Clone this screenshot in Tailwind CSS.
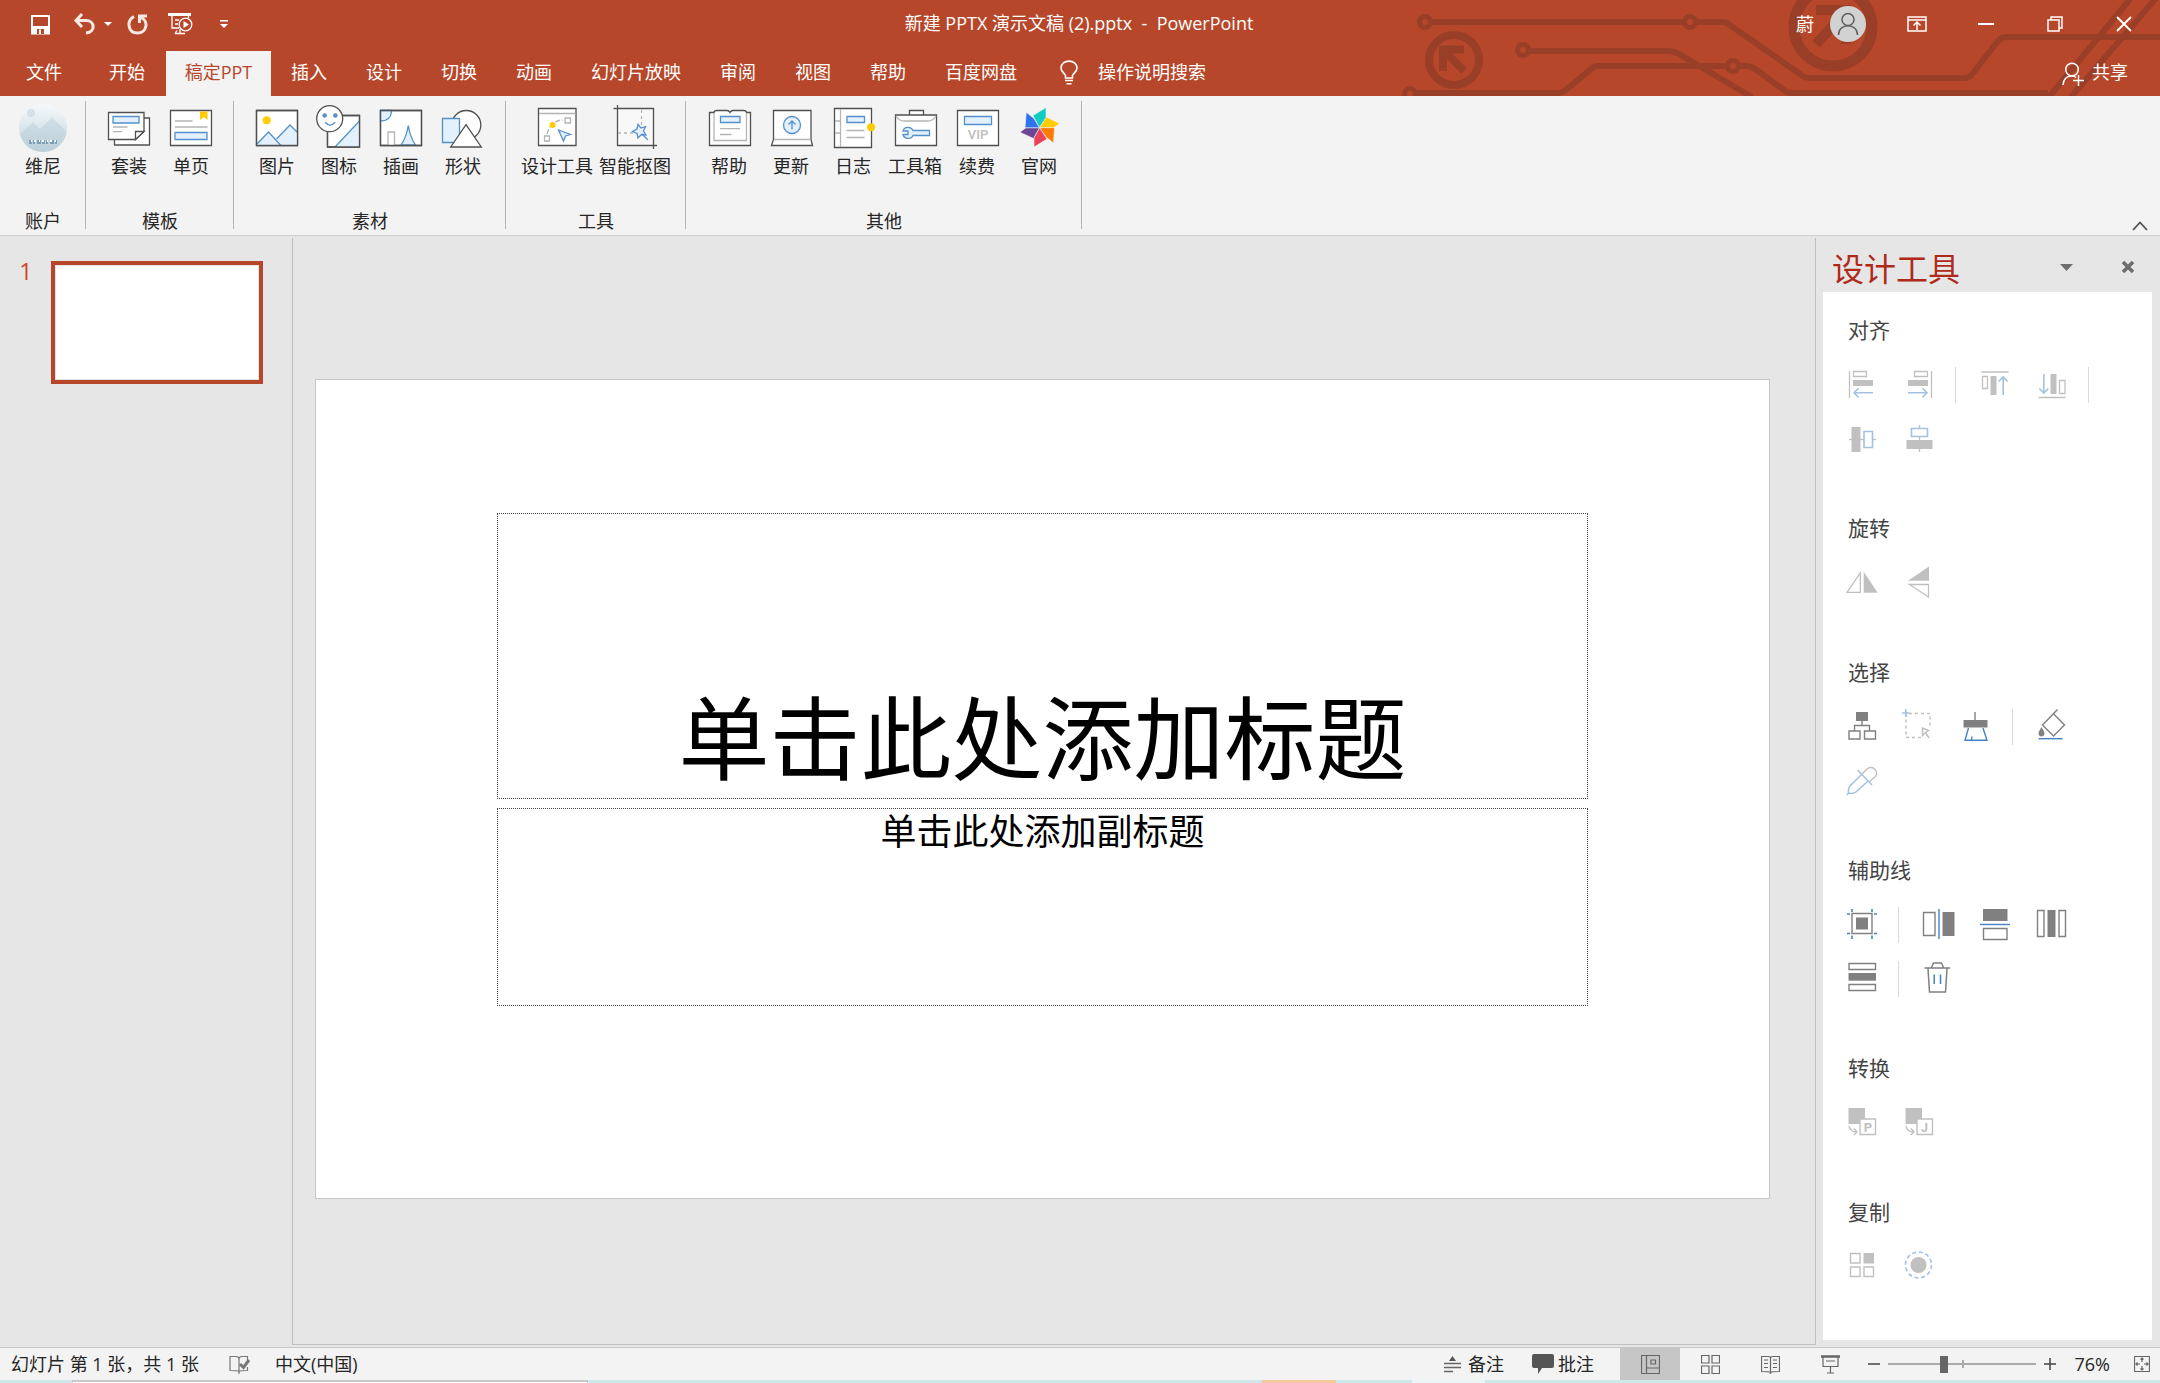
<!DOCTYPE html>
<html lang="zh-CN">
<head>
<meta charset="utf-8">
<meta name="viewport" content="width=device-width, initial-scale=1">
<title>新建 PPTX 演示文稿 (2).pptx - PowerPoint</title>
<script src="https://cdn.jsdelivr.net/npm/@tailwindcss/browser@4"></script>
</head>
<body class="flex min-h-screen flex-col bg-[#e6e6e6] font-['Open_Sans','Noto_Sans_CJK_SC',sans-serif] text-[18px] leading-6 text-[#262626]">

<header class="relative bg-[#b7472a] text-white">
  <!-- circuit decoration -->
  <svg class="absolute top-0 right-0 h-24 w-[780px]" viewBox="0 0 780 96" fill="none" stroke="#993f28" stroke-width="6" aria-hidden="true">
    <circle cx="45" cy="22" r="5.5" stroke-width="5"/><circle cx="310" cy="22" r="5.5" stroke-width="5"/>
    <path d="M51 22H304M316 22H342Q347 22 351 26L420 74Q424 78 430 78H584Q590 78 593 73L618 41Q621 37 627 37H780"/>
    <circle cx="143" cy="50" r="5.5" stroke-width="5"/>
    <path d="M149 51H288Q294 51 299 54L372 97"/>
    <circle cx="30" cy="94" r="5.5" stroke-width="5"/><circle cx="353" cy="66" r="5.5" stroke-width="5"/>
    <path d="M36 93H178Q183 93 187 89L211 69Q214 66 219 66H347M359 66H366Q371 66 375 69L404 90Q407 93 412 93H668"/>
    <path d="M669 97L751-2M691 97L778-4"/>
    <circle cx="74" cy="60" r="25" stroke-width="8"/>
    <path d="M63 71V49.500H84M64 50L84 71" stroke-width="8"/>
    <circle cx="453" cy="27" r="39" stroke-width="11"/>
    <path d="M436 44L466 12M436 10H466V44" stroke-width="10"/>
  </svg>

  <div class="relative flex h-[51px] items-start">
    <div class="flex h-12 flex-1 items-center">
      <button aria-label="保存" class="mr-[22px] ml-[30px]"><svg width="21" height="21" viewBox="0 0 21 21" fill="none" stroke="#fff" stroke-width="2"><path d="M2 2H19V19.500H2Z"/><path d="M2 12H19V20H2Z" fill="#fff" stroke="none"/><path d="M7 15H14V20H7Z" fill="#b7472a" stroke="none"/><path d="M9 15.500H11V20H9Z" fill="#fff" stroke="none"/></svg></button>
      <button aria-label="撤消" class="mr-2"><svg width="23" height="22" viewBox="0 0 23 22" fill="none" stroke="#f6e9e5" stroke-width="3"><path d="M9 1L3 7.500L9 14M3 7.500H13C22 7.500 23 19 13 20"/></svg></button>
      <button aria-label="撤消选项" class="mr-[15px]"><svg width="8" height="6" viewBox="0 0 8 6" fill="#fff"><path d="M0 1H8L4 5Z"/></svg></button>
      <button aria-label="恢复" class="mr-5"><svg width="21" height="22" viewBox="0 0 21 22" fill="none" stroke="#f6e9e5" stroke-width="3"><path d="M7 3.500C-1 8 1 20 10.500 20C20 20 22 8 14 4.500M12.500 10V3H20"/></svg></button>
      <button aria-label="从头开始放映" class="mr-[27px]"><svg width="25" height="22" viewBox="0 0 25 22" fill="none" stroke="#fff" stroke-width="1.300"><path d="M0 1.500H23" stroke-width="3"/><path d="M4 3V15H11M20.500 3V5M7 7H11M7 11H10M12 16V20M7 20.500H17M9 17.500L7 20.500"/><circle cx="17.500" cy="11.500" r="6.300"/><path d="M15.500 8L21 11.500L15.500 15Z" fill="#fff" stroke="none"/></svg></button>
      <button aria-label="自定义快速访问工具栏"><svg width="8" height="8" viewBox="0 0 8 8" fill="#fff"><path d="M0 0H8V1.500H0ZM0 4H8L4 8Z"/></svg></button>
    </div>
    <h1 class="h-12 leading-[47px] whitespace-pre">新建 PPTX 演示文稿 (2).pptx  -  PowerPoint</h1>
    <div class="flex h-12 flex-1 items-center justify-end pr-[2px]">
      <button class="mr-4 flex items-center gap-4">蔚
        <svg width="36" height="36" viewBox="0 0 36 36" fill="none" stroke="#5f5f5f" stroke-width="1.500"><circle cx="18" cy="18" r="18" fill="#d2d2d2" stroke="none"/><circle cx="18" cy="13.500" r="6"/><path d="M8.500 29C8.500 16.500 27.500 16.500 27.500 29"/></svg>
      </button>
      <button aria-label="功能区显示选项" class="flex h-12 w-[69px] items-center justify-center"><svg width="20" height="16" viewBox="0 0 20 16" fill="none" stroke="#fff" stroke-width="1.500"><path d="M1 1H19V15H1ZM1 4H19M10 14V7M6.500 9.500L10 6L13.500 9.500"/></svg></button>
      <button aria-label="最小化" class="flex h-12 w-[69px] items-center justify-center"><svg width="16" height="16" viewBox="0 0 16 16"><path d="M0 7H16V9H0Z" fill="#fff"/></svg></button>
      <button aria-label="向下还原" class="flex h-12 w-[69px] items-center justify-center"><svg width="16" height="16" viewBox="0 0 16 16" fill="none" stroke="#fff" stroke-width="1.500"><path d="M1 4H12V15H1ZM4 4V1H15V12H12"/></svg></button>
      <button aria-label="关闭" class="flex h-12 w-[69px] items-center justify-center"><svg width="16" height="16" viewBox="0 0 16 16" stroke="#fff" stroke-width="1.800"><path d="M1 1L15 15M15 1L1 15"/></svg></button>
    </div>
  </div>

  <nav class="relative flex h-[45px] items-stretch gap-px" aria-label="功能区选项卡">
    <button class="w-[88px] pb-[3px]">文件</button>
    <button class="w-[76px] pb-[3px]">开始</button>
    <button class="w-[105px] bg-[#f3f3f3] pb-[3px] text-[#b7472a]">稿定PPT</button>
    <button class="px-[19px] pb-[3px]">插入</button>
    <button class="px-[19px] pb-[3px]">设计</button>
    <button class="px-[19px] pb-[3px]">切换</button>
    <button class="px-[19px] pb-[3px]">动画</button>
    <button class="px-[19px] pb-[3px]">幻灯片放映</button>
    <button class="px-[19px] pb-[3px]">审阅</button>
    <button class="px-[19px] pb-[3px]">视图</button>
    <button class="px-[19px] pb-[3px]">帮助</button>
    <button class="px-[19px] pb-[3px]">百度网盘</button>
    <button class="flex items-center gap-5 px-[23px] pb-[3px]">
      <svg width="18" height="25" viewBox="0 0 18 25" fill="none" stroke="#fff" stroke-width="1.600"><path d="M5.500 18V15.500C4 12.500 1 11.500 1 8C1 -1.200 17 -1.200 17 8C17 11.500 14 12.500 12.500 15.500V18ZM5 20.500H13M6.500 23.800H11.500"/></svg>
      操作说明搜索</button>
    <button class="mr-8 ml-auto flex items-center gap-2 pb-[3px]">
      <svg class="mt-1" width="22" height="24" viewBox="0 0 22 24" fill="none" stroke="#fff" stroke-width="1.500"><circle cx="10" cy="7.500" r="6.300"/><path d="M1 23C1.500 17.500 4.500 14 10 14C12 14 13 14.500 14 15.500M16.500 13V24M11 18.500H22"/></svg>
      共享</button>
  </nav>
</header>

<section class="relative flex items-start border-b border-[#cfcfcf] bg-[#f3f3f3] pt-[5px] pb-[6px]" aria-label="稿定PPT">
  <div class="flex h-32 flex-col justify-between border-r border-[#b4b4b4] pr-[11px] pl-[12px] text-center">
    <div class="flex">
      <button class="flex w-[62px] flex-col items-center pt-[3px]">
        <svg width="48" height="48" viewBox="0 0 48 48"><defs><linearGradient id="sky" x2="0" y2="1"><stop stop-color="#f5f9fb"/><stop offset="1" stop-color="#bfd3dd"/></linearGradient><clipPath id="round"><circle cx="24" cy="24" r="24"/></clipPath></defs><g clip-path="url(#round)"><path d="M0 0H48V48H0Z" fill="url(#sky)"/><circle cx="12" cy="9" r="4" fill="#d5e0e6"/><path d="M0 31L14 18L21 25L33 13L48 28V48H0Z" fill="#b9cdd6" fill-opacity=".45"/><path d="M10 38H38" stroke="#7f9fb1" stroke-width="4" stroke-dasharray="3 1 2 2 4 1"/><path d="M12 37H37" stroke="#fff" stroke-width="2" stroke-dasharray="1 2 2 3"/></g></svg>
        <span class="mt-[2px]">维尼</span></button>
    </div>
    <div class="mb-[-4px]">账户</div>
  </div>

  <div class="flex h-32 flex-col justify-between border-r border-[#b4b4b4] pr-[11px] pl-[12px] text-center">
    <div class="flex">
      <button class="flex w-[62px] flex-col items-center pt-[3px]">
        <svg width="48" height="48" viewBox="0 0 48 48" fill="#fff" stroke="#505050" stroke-width="1.300"><path d="M9.500 14H44.500V41H9.500Z"/><path d="M3.500 8.500H39V27.500L30.500 35.500H3.500Z"/><path d="M39 27.500H30.500V35.500Z"/><path d="M8 12.500H34V19H8Z" fill="#e3f1fe" stroke="#5690cb"/><path d="M8 23H22.500M8 27.700H17" stroke="#b4b4b4"/></svg>
        <span class="mt-[2px]">套装</span></button>
      <button class="flex w-[62px] flex-col items-center pt-[3px]">
        <svg width="48" height="48" viewBox="0 0 48 48" fill="#fff" stroke="#505050" stroke-width="1.300"><path d="M3.500 6.500H44.500V41.500H3.500Z"/><path d="M33 7.500H40.500V16L36.800 13L33 16Z" fill="#fc0" stroke="none"/><path d="M8 28.500H40V35.500H8Z" fill="#e3f1fe" stroke="#5690cb"/><path d="M8 17H25.500M8 23H40.500" stroke="#b4b4b4"/></svg>
        <span class="mt-[2px]">单页</span></button>
    </div>
    <div class="mb-[-4px]">模板</div>
  </div>

  <div class="flex h-32 flex-col justify-between border-r border-[#b4b4b4] pr-[11px] pl-[12px] text-center">
    <div class="flex">
      <button class="flex w-[62px] flex-col items-center pt-[3px]">
        <svg width="48" height="48" viewBox="0 0 48 48" fill="#fff" stroke="#505050" stroke-width="1.300"><path d="M3.500 6.500H44.500V41.500H3.500Z"/><circle cx="13.700" cy="16.300" r="4" fill="#fc0" stroke="none"/><path d="M4 40L15.500 28L27.500 41H4Z M23.500 34.500L37 21L44.500 28.500V41H29Z" fill="#e3f1fe" stroke="none"/><path d="M4 40L15.500 28L27.500 41M23.500 35L37 21L44.500 28.500" fill="none" stroke="#5690cb"/><path d="M3.500 6.500H44.500V41.500H3.500Z" fill="none"/></svg>
        <span class="mt-[2px]">图片</span></button>
      <button class="flex w-[62px] flex-col items-center pt-[3px]">
        <svg width="48" height="48" viewBox="0 0 48 48" fill="#fff" stroke="#505050" stroke-width="1.300"><path d="M12.500 11.500H44.500V43H12.500Z"/><path d="M20 43L44.500 17V43Z" fill="#e3f1fe" stroke="none"/><path d="M20 43L44.500 17" stroke="#5690cb"/><path d="M12.500 11.500H44.500V43H12.500Z" fill="none"/><circle cx="14.700" cy="14.700" r="13"/><circle cx="9.700" cy="11.500" r="2.300" fill="#5690cb" stroke="none"/><circle cx="20.300" cy="11.500" r="2.300" fill="#5690cb" stroke="none"/><path d="M10 18.300Q15 24 20 18.300" fill="none" stroke="#5690cb"/></svg>
        <span class="mt-[2px]">图标</span></button>
      <button class="flex w-[62px] flex-col items-center pt-[3px]">
        <svg width="48" height="48" viewBox="0 0 48 48" fill="#fff" stroke="#505050" stroke-width="1.300"><path d="M3.500 6.500H44.500V41.500H3.500Z"/><path d="M14.500 6.500V8Q13.500 17 3.500 17V6.500Z" fill="#e3f1fe" stroke="#5690cb"/><path d="M11 41V28H17.500V41" stroke="#b4b4b4"/><path d="M24 41Q29.500 33 31.300 21.500Q33 33 38.500 41Z" fill="#e3f1fe" stroke="#5690cb"/><path d="M3.500 6.500H44.500V41.500H3.500Z" fill="none"/></svg>
        <span class="mt-[2px]">插画</span></button>
      <button class="flex w-[62px] flex-col items-center pt-[3px]">
        <svg width="48" height="48" viewBox="0 0 48 48" fill="#fff" stroke="#505050" stroke-width="1.300"><circle cx="27.300" cy="21" r="14.500"/><path d="M3.500 14.500H20.500V38.500H3.500Z" fill="#e3f1fe" stroke="#5690cb"/><path d="M27 20.700L42.300 43H11.700Z"/></svg>
        <span class="mt-[2px]">形状</span></button>
    </div>
    <div class="mb-[-4px]">素材</div>
  </div>

  <div class="flex h-32 flex-col justify-between border-r border-[#b4b4b4] pr-[11px] pl-[12px] text-center">
    <div class="flex">
      <button class="flex w-[78px] flex-col items-center pt-[3px]">
        <svg width="48" height="48" viewBox="0 0 48 48" fill="#fff" stroke="#505050" stroke-width="1.300"><path d="M5.500 4.500H43V41.500H5.500Z"/><path d="M6 9.500H42.500M11.500 32H16.500V37H11.500ZM32 14H37.500V19H32Z" stroke="#b4b4b4"/><path d="M14 30Q15 26 17 23M22 18Q26 16 29.500 16" fill="none" stroke="#b4b4b4" stroke-dasharray="5 2"/><circle cx="19.500" cy="21" r="3" fill="#fc0" stroke="none"/><path d="M25.500 26L37.500 30.500L32.500 32L30.500 37Z" fill="#e3f1fe" stroke="#5690cb"/></svg>
        <span class="mt-[2px]">设计工具</span></button>
      <button class="flex w-[78px] flex-col items-center pt-[3px]">
        <svg width="48" height="48" viewBox="0 0 48 48" fill="#fff" stroke="#505050" stroke-width="1.300"><path d="M6.500 4.500H42.500V41.500H6.500Z" fill="#f8f8f8"/><path d="M2.500 4.500H6.500V1M42.500 45V41.500H46"/><path d="M30.500 6V22M7 29H23" stroke="#b4b4b4" stroke-dasharray="3 3"/><path d="M27 20.500L30 24L34.500 22.500L32.500 27L35 31L30.500 30.500L27 34L26 29.500L21.500 27.500L26 25Z" fill="#e3f1fe" stroke="#5690cb"/><path d="M31 30L37 36" stroke="#5690cb"/></svg>
        <span class="mt-[2px]">智能抠图</span></button>
    </div>
    <div class="mb-[-4px]">工具</div>
  </div>

  <div class="flex h-32 flex-col justify-between border-r border-[#b4b4b4] pr-[11px] pl-[12px] text-center">
    <div class="flex">
      <button class="flex w-[62px] flex-col items-center pt-[3px]">
        <svg width="48" height="48" viewBox="0 0 48 48" fill="#fff" stroke="#505050" stroke-width="1.300"><path d="M4.500 8.500H9Q9 6.500 12 6.500H22Q24 6.500 25 8.500Q26 6.500 28 6.500H38.500Q41.500 6.500 41.500 8.500H45.500V41.500H4.500Z"/><path d="M9 9V36.500H41.500V9M15 24.700H35M15 30.500H26.500" fill="none" stroke="#b4b4b4"/><path d="M15.500 12.500H35V18.500H15.500Z" fill="#e3f1fe" stroke="#5690cb"/></svg>
        <span class="mt-[2px]">帮助</span></button>
      <button class="flex w-[62px] flex-col items-center pt-[3px]">
        <svg width="48" height="48" viewBox="0 0 48 48" fill="#fff" stroke="#505050" stroke-width="1.300"><path d="M6.500 6.500H44V35.500L45.500 41.500H4.500L6.500 35.500Z"/><path d="M7 35.500H43.500" stroke="#b4b4b4"/><circle cx="25" cy="21" r="8.500" fill="#e3f1fe" stroke="#5690cb"/><path d="M25 25.500V17M21.500 20.500L25 17L28.500 20.500" fill="none" stroke="#5690cb"/></svg>
        <span class="mt-[2px]">更新</span></button>
      <button class="flex w-[62px] flex-col items-center pt-[3px]">
        <svg width="48" height="48" viewBox="0 0 48 48" fill="#fff" stroke="#505050" stroke-width="1.300"><path d="M5.500 4.500H42.500V43.500H5.500Z"/><path d="M11.500 5V43M6 17H11.500M6 29H11.500M17.500 26.500H35.500M17.500 33.500H35.500" stroke="#b4b4b4"/><path d="M18 12.500H35.500V18.500H18Z" fill="#e3f1fe" stroke="#5690cb"/><circle cx="42" cy="23.300" r="4" fill="#fc0" stroke="none"/></svg>
        <span class="mt-[2px]">日志</span></button>
      <button class="flex w-[62px] flex-col items-center pt-[3px]">
        <svg width="48" height="48" viewBox="0 0 48 48" fill="#fff" stroke="#505050" stroke-width="1.300"><path d="M4.500 11H45.500V41.500H4.500ZM18.500 11V6.500H32.500V11"/><path d="M5 12Q8 17 13 17H37Q42 17 45 12" fill="none" stroke="#b4b4b4"/><path d="M22 26.500H38.500V31.500H22C20 36 13 35 12 30.500H17V27H12C13 22.500 20 22 22 26.500Z" fill="#e3f1fe" stroke="#5690cb"/></svg>
        <span class="mt-[2px]">工具箱</span></button>
      <button class="flex w-[62px] flex-col items-center pt-[3px]">
        <svg width="48" height="48" viewBox="0 0 48 48" fill="#fff" stroke="#505050" stroke-width="1.300"><path d="M4.500 6.500H45.500V41.500H4.500Z"/><path d="M11.500 12.500H38.500V20.500H11.500Z" fill="#e3f1fe" stroke="#5690cb"/><text x="25" y="35" fill="#bdbdbd" stroke="none" text-anchor="middle" font-family="Roboto, sans-serif" font-size="13" font-weight="500">VIP</text></svg>
        <span class="mt-[2px]">续费</span></button>
      <button class="flex w-[62px] flex-col items-center pt-[3px]">
        <svg width="48" height="48" viewBox="0 0 48 48" stroke="#f3f3f3" stroke-width=".6"><path d="M24.500 23.700L18 11.500L31 3.500V14Z" fill="#0fcdc0"/><path d="M24.500 23.700L31.500 13L44.600 19.500L38.500 23.700Z" fill="#fc0"/><path d="M24.500 23.700H39.500L38.500 39L31 33Z" fill="#ff7a00"/><path d="M24.500 23.700L32 35L19 43V33.500Z" fill="#ea4259"/><path d="M24.500 23.700L18.500 34.500L5 28.300L11 23.700Z" fill="#6d4596"/><path d="M24.500 23.700H10L11.300 8.300L19 14.500Z" fill="#2f72ee"/></svg>
        <span class="mt-[2px]">官网</span></button>
    </div>
    <div class="mb-[-4px]">其他</div>
  </div>
  <button aria-label="折叠功能区" class="mt-auto mr-3 mb-[-2px] ml-auto"><svg width="16" height="10" viewBox="0 0 16 10" fill="none" stroke="#505050" stroke-width="1.800"><path d="M1 9L8 1.500L15 9"/></svg></button>
</section>

<div class="flex flex-1 items-stretch pt-[2px]">
  <aside class="flex w-[292px] items-start pt-[23px]" aria-label="幻灯片缩略图">
    <span class="w-[51px] pl-[19px] text-[24px] leading-5 text-[#d24726]">1</span>
    <button aria-label="幻灯片 1" class="h-[123px] w-[212px] border-4 border-[#b7472a] bg-white outline-1 -outline-offset-5 outline-[#e3e3e3]"></button>
  </aside>

  <main class="mb-[2px] flex flex-1 items-center border-x border-b border-[#c0c0c0] pr-[45px] pb-1 pl-[22px]">
    <article class="grid aspect-[1455/820] w-full grid-cols-[181fr_1093fr_181fr] grid-rows-[133fr_287fr_9fr_199fr_192fr] border border-[#c6c6c6] bg-white text-center text-black">
      <h2 class="col-start-2 row-start-2 flex items-end justify-center border border-dotted border-[#444] text-[91px] leading-[120px]">单击此处添加标题</h2>
      <p class="col-start-2 row-start-4 border border-dotted border-[#444] text-[36px] leading-[46px]">单击此处添加副标题</p>
    </article>
  </main>

  <aside class="flex w-[344px] flex-col pr-2 pb-[7px] pl-[7px]" aria-label="设计工具">
    <div class="flex h-[54px] items-center pt-1 pr-[17px] pl-[9px]">
      <h2 class="flex-1 pt-1 text-[32px] leading-10 text-[#b02a1a]">设计工具</h2>
      <button aria-label="任务窗格选项" class="mr-12"><svg width="13" height="7" viewBox="0 0 13 7"><path d="M0 0H13L6.500 7Z" fill="#6e6e6e"/></svg></button>
      <button aria-label="关闭窗格"><svg width="14" height="14" viewBox="0 0 14 14"><path d="M2 2L12 12M12 2L2 12" stroke="#6e6e6e" stroke-width="3.600"/></svg></button>
    </div>
    <div class="flex flex-1 flex-col gap-[38px] bg-white pt-[14px] pr-5 pl-[10px] text-[#444]">
      <section>
        <h3 class="pb-1 pl-[15px] text-[21px] leading-12">对齐</h3>
        <div class="flex flex-wrap">
          <button aria-label="左对齐" class="flex h-[54px] w-[57px] items-center justify-center"><svg class="overflow-visible" width="32" height="32" viewBox="0 0 32 32" fill="none" stroke="#c0c0c0" stroke-width="1.300"><path d="M3.500 2V29M7.500 2.500H20.500V7.500H7.500Z"/><path d="M7 11H27V17H7Z" fill="#c0c0c0" stroke="none"/><path d="M27 23.700H8M12.500 19.200L8 23.700L12.500 28.200" stroke="#a3c1e0" stroke-width="1.600"/></svg></button>
          <button aria-label="右对齐" class="flex h-[54px] w-[57px] items-center justify-center"><svg class="overflow-visible" width="32" height="32" viewBox="0 0 32 32" fill="none" stroke="#c0c0c0" stroke-width="1.300"><path d="M28.500 2V29M11.500 2.500H24.500V7.500H11.500Z"/><path d="M5 11H25V17H5Z" fill="#c0c0c0" stroke="none"/><path d="M5 23.700H24M19.500 19.200L24 23.700L19.500 28.200" stroke="#a3c1e0" stroke-width="1.600"/></svg></button>
          <span class="flex h-[54px] w-[19px] items-center pl-2"><span class="h-9 w-px bg-[#dadada]"></span></span>
          <button aria-label="顶端对齐" class="flex h-[54px] w-[57px] items-center justify-center"><svg class="overflow-visible" width="32" height="32" viewBox="0 0 32 32" fill="none" stroke="#c0c0c0" stroke-width="1.300"><path d="M2.500 3H29.500M3.500 7.500H8.500V19.500H3.500Z"/><path d="M11.500 7H17.500V26H11.500Z" fill="#c0c0c0" stroke="none"/><path d="M24.200 26V8M19.700 12.500L24.200 8L28.700 12.500" stroke="#a3c1e0" stroke-width="1.600"/></svg></button>
          <button aria-label="底端对齐" class="flex h-[54px] w-[57px] items-center justify-center"><svg class="overflow-visible" width="32" height="32" viewBox="0 0 32 32" fill="none" stroke="#c0c0c0" stroke-width="1.300"><path d="M2.500 28.500H29.500M23.500 11.500H29V24.500H23.500Z"/><path d="M14.500 5H20.500V25H14.500Z" fill="#c0c0c0" stroke="none"/><path d="M7.800 5V24M3.300 19.500L7.800 24L12.300 19.500" stroke="#a3c1e0" stroke-width="1.600"/></svg></button>
          <span class="flex h-[54px] w-[19px] items-center pl-2"><span class="h-9 w-px bg-[#dadada]"></span></span>
          <button aria-label="垂直居中" class="flex h-[54px] w-[57px] items-center justify-center"><svg class="overflow-visible" width="32" height="32" viewBox="0 0 32 32" fill="none" stroke="#c0c0c0" stroke-width="1.300"><path d="M3 16.500H30"/><path d="M5.500 4H14.500V29H5.500Z" fill="#c0c0c0" stroke="none"/><path d="M18 8.500H26.500V24.500H18Z" fill="#fff" stroke="#a3c1e0" stroke-width="1.600"/></svg></button>
          <button aria-label="水平居中" class="flex h-[54px] w-[57px] items-center justify-center"><svg class="overflow-visible" width="32" height="32" viewBox="0 0 32 32" fill="none" stroke="#c0c0c0" stroke-width="1.300"><path d="M16.500 2V29"/><path d="M3.500 17H29.500V26H3.500Z" fill="#c0c0c0" stroke="none"/><path d="M8.500 5.500H24.500V13.500H8.500Z" fill="#fff" stroke="#a3c1e0" stroke-width="1.600"/></svg></button>
        </div>
      </section>
      <section>
        <h3 class="pb-1 pl-[15px] text-[21px] leading-12">旋转</h3>
        <div class="flex flex-wrap">
          <button aria-label="水平翻转" class="flex h-[54px] w-[57px] items-center justify-center"><svg class="overflow-visible" width="32" height="32" viewBox="0 0 32 32" fill="none" stroke="#c0c0c0" stroke-width="1.300"><path d="M1 25.300H14.300V5.800Z"/><path d="M17.700 4.700V25.700H31.700Z" fill="#c0c0c0" stroke="none"/></svg></button>
          <button aria-label="垂直翻转" class="flex h-[54px] w-[57px] items-center justify-center"><svg class="overflow-visible" width="32" height="32" viewBox="0 0 32 32" fill="none" stroke="#c0c0c0" stroke-width="1.300"><path d="M26-.500V13.700H5Z" fill="#c0c0c0" stroke="none"/><path d="M25.500 17.500V30L6.500 17.500Z"/></svg></button>
        </div>
      </section>
      <section>
        <h3 class="pb-1 pl-[15px] text-[21px] leading-12">选择</h3>
        <div class="flex flex-wrap">
          <button aria-label="选择同级" class="flex h-[54px] w-[57px] items-center justify-center"><svg class="overflow-visible" width="32" height="32" viewBox="0 0 32 32" fill="none" stroke="#808080" stroke-width="1.400"><path d="M10 1H22V10H10Z" fill="#808080" stroke="none"/><path d="M16 10V14.500M8.500 20V14.500H23.500V20M3 20H14V28H3ZM18.500 20H29.500V28H18.500Z"/></svg></button>
          <button aria-label="框选" class="flex h-[54px] w-[57px] items-center justify-center"><svg class="overflow-visible" width="32" height="32" viewBox="0 0 32 32" fill="none" stroke="#c0c0c0" stroke-width="1.500"><path d="M18 26.500H3V2.500H27V16" stroke-dasharray="3 3"/><path d="M-1 2H6.500M2.800-2V6" stroke="#a3c1e0" stroke-width="1.600"/><path d="M19.500 24.500V17L25.500 19.500L22.500 21.500ZM22.500 21.500L26 27"/></svg></button>
          <button aria-label="格式刷" class="flex h-[54px] w-[57px] items-center justify-center"><svg class="overflow-visible" width="32" height="32" viewBox="0 0 32 32" fill="none" stroke="#808080" stroke-width="1.400"><path d="M15 1V9"/><path d="M3.500 9H27.500V16.500H3.500Z" fill="#808080" stroke="none"/><path d="M8.500 17L5 29.200H27L23 17M12 25.500L11.500 29" stroke="#4682c3"/></svg></button>
          <span class="flex h-[54px] w-[19px] items-center pl-2"><span class="h-9 w-px bg-[#dadada]"></span></span>
          <button aria-label="填充颜色" class="flex h-[54px] w-[57px] items-center justify-center"><svg class="overflow-visible" width="32" height="32" viewBox="0 0 32 32" fill="none" stroke="#808080" stroke-width="1.400"><path d="M21.500-1.500L6.500 14L17.500 25L28.500 14L17.500 2.700"/><path d="M5.500 16C7 19 8.500 20.500 8.500 22.500C8.500 26.500 2.500 26.500 2.500 22.500C2.500 20.500 4 19 5.500 16Z" fill="#808080" stroke="none"/><path d="M2.500 27.700H26.500" stroke="#4682c3"/></svg></button>
          <button aria-label="取色器" class="flex h-[54px] w-[57px] items-center justify-center"><svg class="overflow-visible" width="32" height="32" viewBox="0 0 32 32" fill="none" stroke="#a3c1e0" stroke-width="1.500"><path d="M16 9L21 4C26-1 34 7 29 12L23.500 16.500" stroke="#c0c0c0"/><path d="M11.500 5L26 20M15.500 9.500L4.500 20.500C2.500 22.500 2 24.500 2.500 28C6.500 29 8.500 28.500 10.500 26.500L22 16M2.500 28L1 30"/></svg></button>
        </div>
      </section>
      <section>
        <h3 class="pb-1 pl-[15px] text-[21px] leading-12">辅助线</h3>
        <div class="flex flex-wrap">
          <button aria-label="边框辅助线" class="flex h-[54px] w-[57px] items-center justify-center"><svg class="overflow-visible" width="32" height="32" viewBox="0 0 32 32" fill="none" stroke="#808080" stroke-width="1.400"><path d="M6 4.500H26V24.500H6Z"/><path d="M10 8.500H22V20.500H10Z" fill="#808080" stroke="none"/><path d="M6 0V3M26 0V3M6 26.500V30M26 26.500V30M1 5H4M28 5H31M1 24.500H4M28 24.500H31" stroke="#4682c3" stroke-width="1.600"/></svg></button>
          <span class="flex h-[54px] w-[19px] items-center pl-2"><span class="h-9 w-px bg-[#dadada]"></span></span>
          <button aria-label="垂直辅助线" class="flex h-[54px] w-[57px] items-center justify-center"><svg class="overflow-visible" width="32" height="32" viewBox="0 0 32 32" fill="none" stroke="#808080" stroke-width="1.400"><path d="M1.500 3.500H13V26.500H1.500Z"/><path d="M20.500 3H32.500V27H20.500Z" fill="#808080" stroke="none"/><path d="M17 0V30" stroke="#4682c3"/></svg></button>
          <button aria-label="水平辅助线" class="flex h-[54px] w-[57px] items-center justify-center"><svg class="overflow-visible" width="32" height="32" viewBox="0 0 32 32" fill="none" stroke="#808080" stroke-width="1.400"><path d="M4 0H28.500V12H4Z" fill="#808080" stroke="none"/><path d="M4.500 19.500H28V30.500H4.500Z"/><path d="M1 15.500H31" stroke="#4682c3"/></svg></button>
          <button aria-label="三等分列" class="flex h-[54px] w-[57px] items-center justify-center"><svg class="overflow-visible" width="32" height="32" viewBox="0 0 32 32" fill="none" stroke="#808080" stroke-width="1.400"><path d="M1.500 1.500H8V27.500H1.500ZM23 1.500H29.500V27.500H23Z"/><path d="M11.500 1H19.500V28H11.500Z" fill="#808080" stroke="none"/></svg></button>
          <button aria-label="三等分行" class="flex h-[54px] w-[57px] items-center justify-center"><svg class="overflow-visible" width="32" height="32" viewBox="0 0 32 32" fill="none" stroke="#808080" stroke-width="1.400"><path d="M3 .500H29.500V6.500H3ZM3 21.500H29.500V27.500H3Z"/><path d="M2.500 10H30V17.700H2.500Z" fill="#808080" stroke="none"/></svg></button>
          <span class="flex h-[54px] w-[19px] items-center pl-2"><span class="h-9 w-px bg-[#dadada]"></span></span>
          <button aria-label="删除辅助线" class="flex h-[54px] w-[57px] items-center justify-center"><svg class="overflow-visible" width="32" height="32" viewBox="0 0 32 32" fill="none" stroke="#808080" stroke-width="1.500"><path d="M2.500 5H28.200M9.500 4.500L11.500 0H19.500L21.500 4.500M6 5.500L7.500 29H23.500L25 5.500"/><path d="M12.200 11.500V21M18.500 11.500V21" stroke="#4682c3"/></svg></button>
        </div>
      </section>
      <section>
        <h3 class="pb-1 pl-[15px] text-[21px] leading-12">转换</h3>
        <div class="flex flex-wrap">
          <button aria-label="转为 PNG" class="flex h-[54px] w-[57px] items-center justify-center"><svg class="overflow-visible" width="32" height="32" viewBox="0 0 32 32" fill="none" stroke="#c0c0c0" stroke-width="1.400"><path d="M2.500 1H19V17H2.500Z" fill="#c0c0c0" stroke="none"/><path d="M14 12H29.500V27.500H14Z" fill="#fff"/><text x="22" y="24.500" fill="#c0c0c0" stroke="none" text-anchor="middle" font-family="Roboto, sans-serif" font-size="13" font-weight="700">P</text><path d="M3 19Q4 25 11 25M8 21.500L11 25L7.500 28"/></svg></button>
          <button aria-label="转为 JPG" class="flex h-[54px] w-[57px] items-center justify-center"><svg class="overflow-visible" width="32" height="32" viewBox="0 0 32 32" fill="none" stroke="#c0c0c0" stroke-width="1.400"><path d="M2.500 1H19V17H2.500Z" fill="#c0c0c0" stroke="none"/><path d="M14 12H29.500V27.500H14Z" fill="#fff"/><text x="21.500" y="24.500" fill="#c0c0c0" stroke="none" text-anchor="middle" font-family="Roboto, sans-serif" font-size="13" font-weight="700">J</text><path d="M3 19Q4 25 11 25M8 21.500L11 25L7.500 28"/></svg></button>
        </div>
      </section>
      <section>
        <h3 class="pb-1 pl-[15px] text-[21px] leading-12">复制</h3>
        <div class="flex flex-wrap">
          <button aria-label="矩阵复制" class="flex h-[54px] w-[57px] items-center justify-center"><svg class="overflow-visible" width="32" height="32" viewBox="0 0 32 32" fill="none" stroke="#c0c0c0" stroke-width="1.400"><path d="M4.500 2.500H14V12H4.500ZM4.500 16H14V25.500H4.500ZM18 16H27.500V25.500H18Z"/><path d="M17.500 2H28V12.500H17.500Z" fill="#c0c0c0" stroke="none"/></svg></button>
          <button aria-label="环形复制" class="flex h-[54px] w-[57px] items-center justify-center"><svg class="overflow-visible" width="32" height="32" viewBox="0 0 32 32" fill="none"><circle cx="15.500" cy="14" r="13" stroke="#a3c1e0" stroke-width="1.600" stroke-dasharray="4 2.800"/><circle cx="15.500" cy="14" r="8" fill="#c0c0c0"/></svg></button>
        </div>
      </section>
    </div>
  </aside>
</div>

<footer>
  <div class="flex h-[33px] items-center border-t border-[#c6c6c6] bg-[#f3f3f3]">
    <span class="ml-[11px]">幻灯片 第 1 张，共 1 张</span>
    <button aria-label="拼写检查" class="ml-[30px]"><svg width="21" height="19" viewBox="0 0 21 19" fill="none" stroke="#777" stroke-width="1.200"><path d="M10 16V19M10 2.500V16.500C8.500 15.500 7 15.500 1 15.500V1.500H7Q10 1.500 10 4Q10 1.500 13 1.500H18.500V5M10 16.500Q11 15.500 18.500 15.500V12"/><path d="M11 9L14.500 12.500L20 5" stroke-width="3"/></svg></button>
    <button class="ml-[25px]">中文(中国)</button>
    <button class="ml-auto flex items-center gap-[7px]"><svg width="17" height="18" viewBox="0 0 17 18"><path d="M8.500 1L12 6H5Z" fill="#555"/><path d="M0 8.500H17M0 12.500H17M0 16.500H9" stroke="#666" stroke-width="1.300"/></svg>备注</button>
    <button class="ml-7 flex items-center gap-[4px]"><svg width="22" height="20" viewBox="0 0 22 20" fill="#555"><path d="M2 0H20Q22 0 22 2V12Q22 14 20 14H10L6 20V14H2Q0 14 0 12V2Q0 0 2 0Z"/></svg>批注</button>
    <button aria-label="普通视图" class="ml-[26px] flex h-8 w-[60px] items-center justify-center bg-[#c6c6c6]"><svg width="19" height="19" viewBox="0 0 19 19" fill="none" stroke="#666" stroke-width="1.200"><path d="M.500 .500H18.500V18.500H.500ZM5.500 .500V18.500M5.500 13H18.500M10 5H14.500V9H10Z"/></svg></button>
    <button aria-label="幻灯片浏览" class="flex h-8 w-[60px] items-center justify-center"><svg width="19" height="19" viewBox="0 0 19 19" fill="none" stroke="#666" stroke-width="1.200"><path d="M.500 .500H8V8H.500ZM11 .500H18.500V8H11ZM.500 11H8V18.500H.500ZM11 11H18.500V18.500H11Z"/></svg></button>
    <button aria-label="阅读视图" class="flex h-8 w-[60px] items-center justify-center"><svg width="19" height="19" viewBox="0 0 19 19" fill="none" stroke="#666" stroke-width="1.200"><path d="M9.500 2V19M9.500 17.500Q9 16.500 .500 16.500V1.500H7Q9.500 1.500 9.500 3Q9.500 1.500 12 1.500H18.500V16.500Q10 16.500 9.500 17.500M3 5H7M3 8.500H7M3 12.500H7M12 5H16M12 8.500H16M12 12.500H16"/></svg></button>
    <button aria-label="幻灯片放映" class="flex h-8 w-[60px] items-center justify-center"><svg width="19" height="19" viewBox="0 0 19 19" fill="none" stroke="#666" stroke-width="1.200"><path d="M0 1.500H19" stroke-width="2.500"/><path d="M2 2V11.500H17V2M5 6H14M9.500 11.500V18M6 18H13"/></svg></button>
    <button aria-label="缩小" class="ml-[8px] flex h-8 w-3 items-center justify-center"><svg width="12" height="12" viewBox="0 0 12 12"><path d="M0 6H12" stroke="#444" stroke-width="1.500"/></svg></button>
    <span class="relative mx-2 flex h-8 w-[148px] items-center">
      <span class="absolute left-[74px] h-2 w-[2px] bg-[#aaa]"></span>
      <input type="range" aria-label="显示比例" min="0" max="100" value="37" class="relative h-[17px] w-full appearance-none bg-transparent bg-[linear-gradient(#aaa,#aaa)] bg-[length:100%_2px] bg-center bg-no-repeat [&::-webkit-slider-thumb]:h-[17px] [&::-webkit-slider-thumb]:w-2 [&::-webkit-slider-thumb]:appearance-none [&::-webkit-slider-thumb]:bg-[#666]">
    </span>
    <button aria-label="放大" class="flex h-8 w-3 items-center justify-center"><svg width="12" height="12" viewBox="0 0 12 12"><path d="M0 6H12M6 0V12" stroke="#444" stroke-width="1.500"/></svg></button>
    <button class="ml-[14px] w-[40px] text-right">76%</button>
    <button aria-label="适应窗口" class="mr-[10px] ml-6"><svg width="16" height="16" viewBox="0 0 16 16" fill="none" stroke="#666" stroke-width="1.200"><path d="M.500 .500H15.500V15.500H.500ZM8 1.500V6M8 10V14.500M1.500 8H6M10 8H14.500M6.500 3.500L8 2L9.500 3.500M6.500 12.500L8 14L9.500 12.500M3.500 6.500L2 8L3.500 9.500M12.500 6.500L14 8L12.500 9.500"/></svg></button>
  </div>
  <!-- edge of the window behind -->
  <div class="flex h-[3px] bg-[#cfe6ea]">
    <span class="w-[72px]"></span>
    <span class="w-[516px] border-x border-t-2 border-[#c8c8c8] bg-white"></span>
    <span class="w-[674px]"></span>
    <span class="w-[74px] bg-[#f5c9a0]"></span>
    <span class="w-[76px]"></span>
    <span class="w-[73px] bg-[#eaf5f6]"></span>
  </div>
</footer>
</body>
</html>
